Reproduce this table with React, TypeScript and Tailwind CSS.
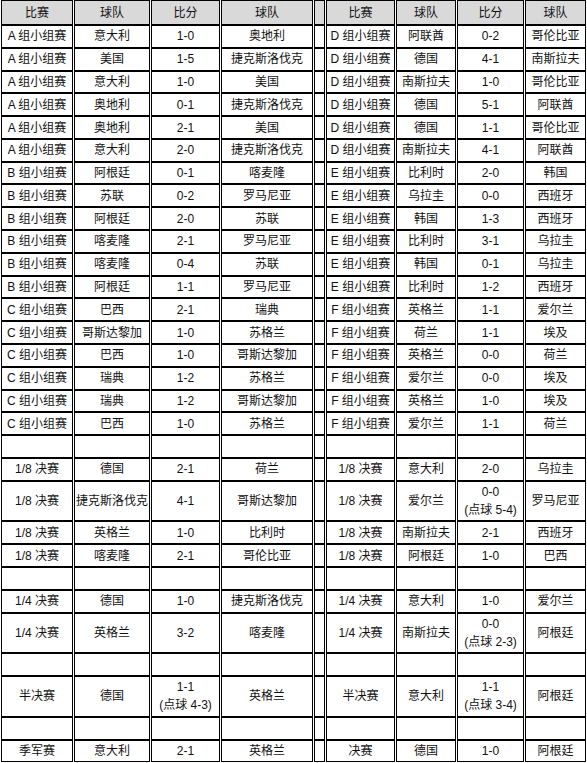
type Row = [string, string, string, string, string, string, string, string] | null

const rows: Row[] = [
  ['A 组小组赛', '意大利', '1-0', '奥地利', 'D 组小组赛', '阿联酋', '0-2', '哥伦比亚'],
  ['A 组小组赛', '美国', '1-5', '捷克斯洛伐克', 'D 组小组赛', '德国', '4-1', '南斯拉夫'],
  ['A 组小组赛', '意大利', '1-0', '美国', 'D 组小组赛', '南斯拉夫', '1-0', '哥伦比亚'],
  ['A 组小组赛', '奥地利', '0-1', '捷克斯洛伐克', 'D 组小组赛', '德国', '5-1', '阿联酋'],
  ['A 组小组赛', '奥地利', '2-1', '美国', 'D 组小组赛', '德国', '1-1', '哥伦比亚'],
  ['A 组小组赛', '意大利', '2-0', '捷克斯洛伐克', 'D 组小组赛', '南斯拉夫', '4-1', '阿联酋'],
  ['B 组小组赛', '阿根廷', '0-1', '喀麦隆', 'E 组小组赛', '比利时', '2-0', '韩国'],
  ['B 组小组赛', '苏联', '0-2', '罗马尼亚', 'E 组小组赛', '乌拉圭', '0-0', '西班牙'],
  ['B 组小组赛', '阿根廷', '2-0', '苏联', 'E 组小组赛', '韩国', '1-3', '西班牙'],
  ['B 组小组赛', '喀麦隆', '2-1', '罗马尼亚', 'E 组小组赛', '比利时', '3-1', '乌拉圭'],
  ['B 组小组赛', '喀麦隆', '0-4', '苏联', 'E 组小组赛', '韩国', '0-1', '乌拉圭'],
  ['B 组小组赛', '阿根廷', '1-1', '罗马尼亚', 'E 组小组赛', '比利时', '1-2', '西班牙'],
  ['C 组小组赛', '巴西', '2-1', '瑞典', 'F 组小组赛', '英格兰', '1-1', '爱尔兰'],
  ['C 组小组赛', '哥斯达黎加', '1-0', '苏格兰', 'F 组小组赛', '荷兰', '1-1', '埃及'],
  ['C 组小组赛', '巴西', '1-0', '哥斯达黎加', 'F 组小组赛', '英格兰', '0-0', '荷兰'],
  ['C 组小组赛', '瑞典', '1-2', '苏格兰', 'F 组小组赛', '爱尔兰', '0-0', '埃及'],
  ['C 组小组赛', '瑞典', '1-2', '哥斯达黎加', 'F 组小组赛', '英格兰', '1-0', '埃及'],
  ['C 组小组赛', '巴西', '1-0', '苏格兰', 'F 组小组赛', '爱尔兰', '1-1', '荷兰'],
  null,
  ['1/8 决赛', '德国', '2-1', '荷兰', '1/8 决赛', '意大利', '2-0', '乌拉圭'],
  ['1/8 决赛', '捷克斯洛伐克', '4-1', '哥斯达黎加', '1/8 决赛', '爱尔兰', '0-0\n(点球 5-4)', '罗马尼亚'],
  ['1/8 决赛', '英格兰', '1-0', '比利时', '1/8 决赛', '南斯拉夫', '2-1', '西班牙'],
  ['1/8 决赛', '喀麦隆', '2-1', '哥伦比亚', '1/8 决赛', '阿根廷', '1-0', '巴西'],
  null,
  ['1/4 决赛', '德国', '1-0', '捷克斯洛伐克', '1/4 决赛', '意大利', '1-0', '爱尔兰'],
  ['1/4 决赛', '英格兰', '3-2', '喀麦隆', '1/4 决赛', '南斯拉夫', '0-0\n(点球 2-3)', '阿根廷'],
  null,
  ['半决赛', '德国', '1-1\n(点球 4-3)', '英格兰', '半决赛', '意大利', '1-1\n(点球 3-4)', '阿根廷'],
  null,
  ['季军赛', '意大利', '2-1', '英格兰', '决赛', '德国', '1-0', '阿根廷'],
]

const header = ['比赛', '球队', '比分', '球队']

const cell = 'border border-black px-0 py-[1.4px] text-center align-middle leading-[18px] whitespace-pre-line'
const headCell = 'border border-black bg-[#d9d9d9] px-0 py-[2.5px] text-center align-middle leading-[18px] font-normal'

export default function App() {
  return (
    <div className="w-[587px] bg-white text-[12px] text-[#111]" style={{ fontFamily: "'Liberation Sans', 'Noto Sans CJK SC', sans-serif" }}>
      <table className="w-[587px] table-fixed border-separate border-spacing-x-[1px] border-spacing-y-0">
        <colgroup>
          <col className="w-[72px]" />
          <col className="w-[76px]" />
          <col className="w-[69px]" />
          <col className="w-[92px]" />
          <col className="w-[11px]" />
          <col className="w-[69px]" />
          <col className="w-[60px]" />
          <col className="w-[67px]" />
          <col className="w-[61px]" />
        </colgroup>
        <thead>
          <tr>
            {header.map((h, i) => (
              <th key={'l' + i} className={headCell}>{h}</th>
            ))}
            <th className={headCell}></th>
            {header.map((h, i) => (
              <th key={'r' + i} className={headCell}>{h}</th>
            ))}
          </tr>
        </thead>
        <tbody>
          {rows.map((r, i) => {
            const cells = r ?? Array(8).fill('\u00a0')
            return (
              <tr key={i}>
                {cells.slice(0, 4).map((c, j) => (
                  <td key={'l' + j} className={cell}>{c}</td>
                ))}
                <td className={cell}>{'\u00a0'}</td>
                {cells.slice(4).map((c, j) => (
                  <td key={'r' + j} className={cell}>{c}</td>
                ))}
              </tr>
            )
          })}
        </tbody>
      </table>
    </div>
  )
}
